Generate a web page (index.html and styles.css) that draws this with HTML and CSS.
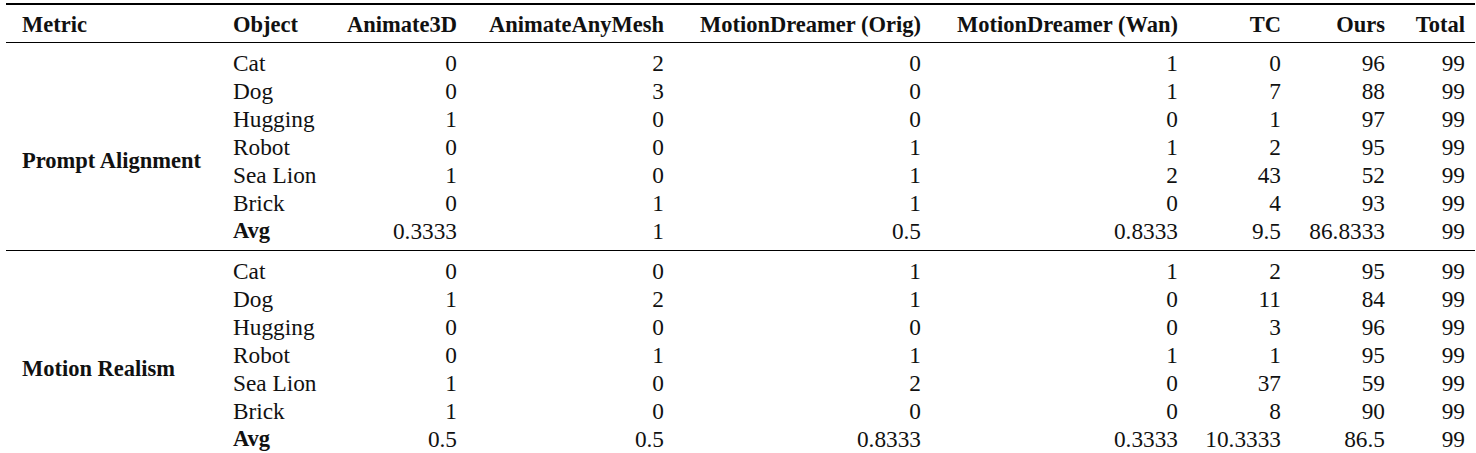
FILE: index.html
```html
<!DOCTYPE html>
<html>
<head>
<meta charset="utf-8">
<link rel="stylesheet" href="styles.css">
</head>
<body>
<table class="results">
  <colgroup>
    <col class="c-metric">
    <col class="c-object">
    <col class="c-a3d">
    <col class="c-aam">
    <col class="c-mdo">
    <col class="c-mdw">
    <col class="c-tc">
    <col class="c-ours">
    <col class="c-total">
    <col class="c-pad">
  </colgroup>
  <thead>
    <tr>
      <th class="left metric-h">Metric</th>
      <th class="left">Object</th>
      <th>Animate3D</th>
      <th>AnimateAnyMesh</th>
      <th>MotionDreamer (Orig)</th>
      <th>MotionDreamer (Wan)</th>
      <th>TC</th>
      <th>Ours</th>
      <th>Total</th>
      <th></th>
    </tr>
  </thead>
  <tbody>
    <tr class="first">
      <td class="group" rowspan="7">Prompt Alignment</td>
      <td class="left">Cat</td><td>0</td><td>2</td><td>0</td><td>1</td><td>0</td><td>96</td><td>99</td><td></td>
    </tr>
    <tr><td class="left">Dog</td><td>0</td><td>3</td><td>0</td><td>1</td><td>7</td><td>88</td><td>99</td><td></td></tr>
    <tr><td class="left">Hugging</td><td>1</td><td>0</td><td>0</td><td>0</td><td>1</td><td>97</td><td>99</td><td></td></tr>
    <tr><td class="left">Robot</td><td>0</td><td>0</td><td>1</td><td>1</td><td>2</td><td>95</td><td>99</td><td></td></tr>
    <tr><td class="left">Sea Lion</td><td>1</td><td>0</td><td>1</td><td>2</td><td>43</td><td>52</td><td>99</td><td></td></tr>
    <tr><td class="left">Brick</td><td>0</td><td>1</td><td>1</td><td>0</td><td>4</td><td>93</td><td>99</td><td></td></tr>
    <tr class="last"><td class="left avg">Avg</td><td>0.3333</td><td>1</td><td>0.5</td><td>0.8333</td><td>9.5</td><td>86.8333</td><td>99</td><td></td></tr>
  </tbody>
  <tbody class="second">
    <tr class="first">
      <td class="group" rowspan="7">Motion Realism</td>
      <td class="left">Cat</td><td>0</td><td>0</td><td>1</td><td>1</td><td>2</td><td>95</td><td>99</td><td></td>
    </tr>
    <tr><td class="left">Dog</td><td>1</td><td>2</td><td>1</td><td>0</td><td>11</td><td>84</td><td>99</td><td></td></tr>
    <tr><td class="left">Hugging</td><td>0</td><td>0</td><td>0</td><td>0</td><td>3</td><td>96</td><td>99</td><td></td></tr>
    <tr><td class="left">Robot</td><td>0</td><td>1</td><td>1</td><td>1</td><td>1</td><td>95</td><td>99</td><td></td></tr>
    <tr><td class="left">Sea Lion</td><td>1</td><td>0</td><td>2</td><td>0</td><td>37</td><td>59</td><td>99</td><td></td></tr>
    <tr><td class="left">Brick</td><td>1</td><td>0</td><td>0</td><td>0</td><td>8</td><td>90</td><td>99</td><td></td></tr>
    <tr class="last"><td class="left avg">Avg</td><td>0.5</td><td>0.5</td><td>0.8333</td><td>0.3333</td><td>10.3333</td><td>86.5</td><td>99</td><td></td></tr>
  </tbody>
</table>
</body>
</html>
```
FILE: styles.css
```css
html, body {
  margin: 0;
  padding: 0;
  background: #ffffff;
}

body {
  font-family: "Liberation Serif", "Times New Roman", serif;
  font-size: 23.3px;
  color: #111111;
}

.results {
  margin: 3px 0 0 6px;
  width: 1469px;
  table-layout: fixed;
  border-collapse: collapse;
  line-height: 28px;
}

.c-metric { width: 227px; }
.c-object { width: 97px; }
.c-a3d { width: 127px; }
.c-aam { width: 207px; }
.c-mdo { width: 257px; }
.c-mdw { width: 257px; }
.c-tc { width: 103px; }
.c-ours { width: 104px; }
.c-total { width: 80px; }
.c-pad { width: 10px; }

.results th,
.results td {
  padding: 0;
  text-align: right;
  white-space: nowrap;
  vertical-align: top;
}

.results th {
  font-weight: bold;
  font-size: 22.5px;
  padding-top: 6px;
  padding-bottom: 3px;
}

.results thead tr {
  border-top: 2px solid #000;
  border-bottom: 1px solid #000;
}

.results .left {
  text-align: left;
}

.results .metric-h {
  padding-left: 16px;
}

.results tr.first td {
  padding-top: 6px;
}

.results tr.last td {
  padding-bottom: 5px;
}

.results tbody.second {
  border-top: 1px solid #000;
}

.results tr.first td.group {
  text-align: left;
  font-weight: bold;
  font-size: 22.5px;
  padding-left: 16px;
  padding-top: 29px;
  padding-bottom: 0;
  vertical-align: middle;
}

.results td.avg {
  font-weight: bold;
  font-size: 22.5px;
}
```
